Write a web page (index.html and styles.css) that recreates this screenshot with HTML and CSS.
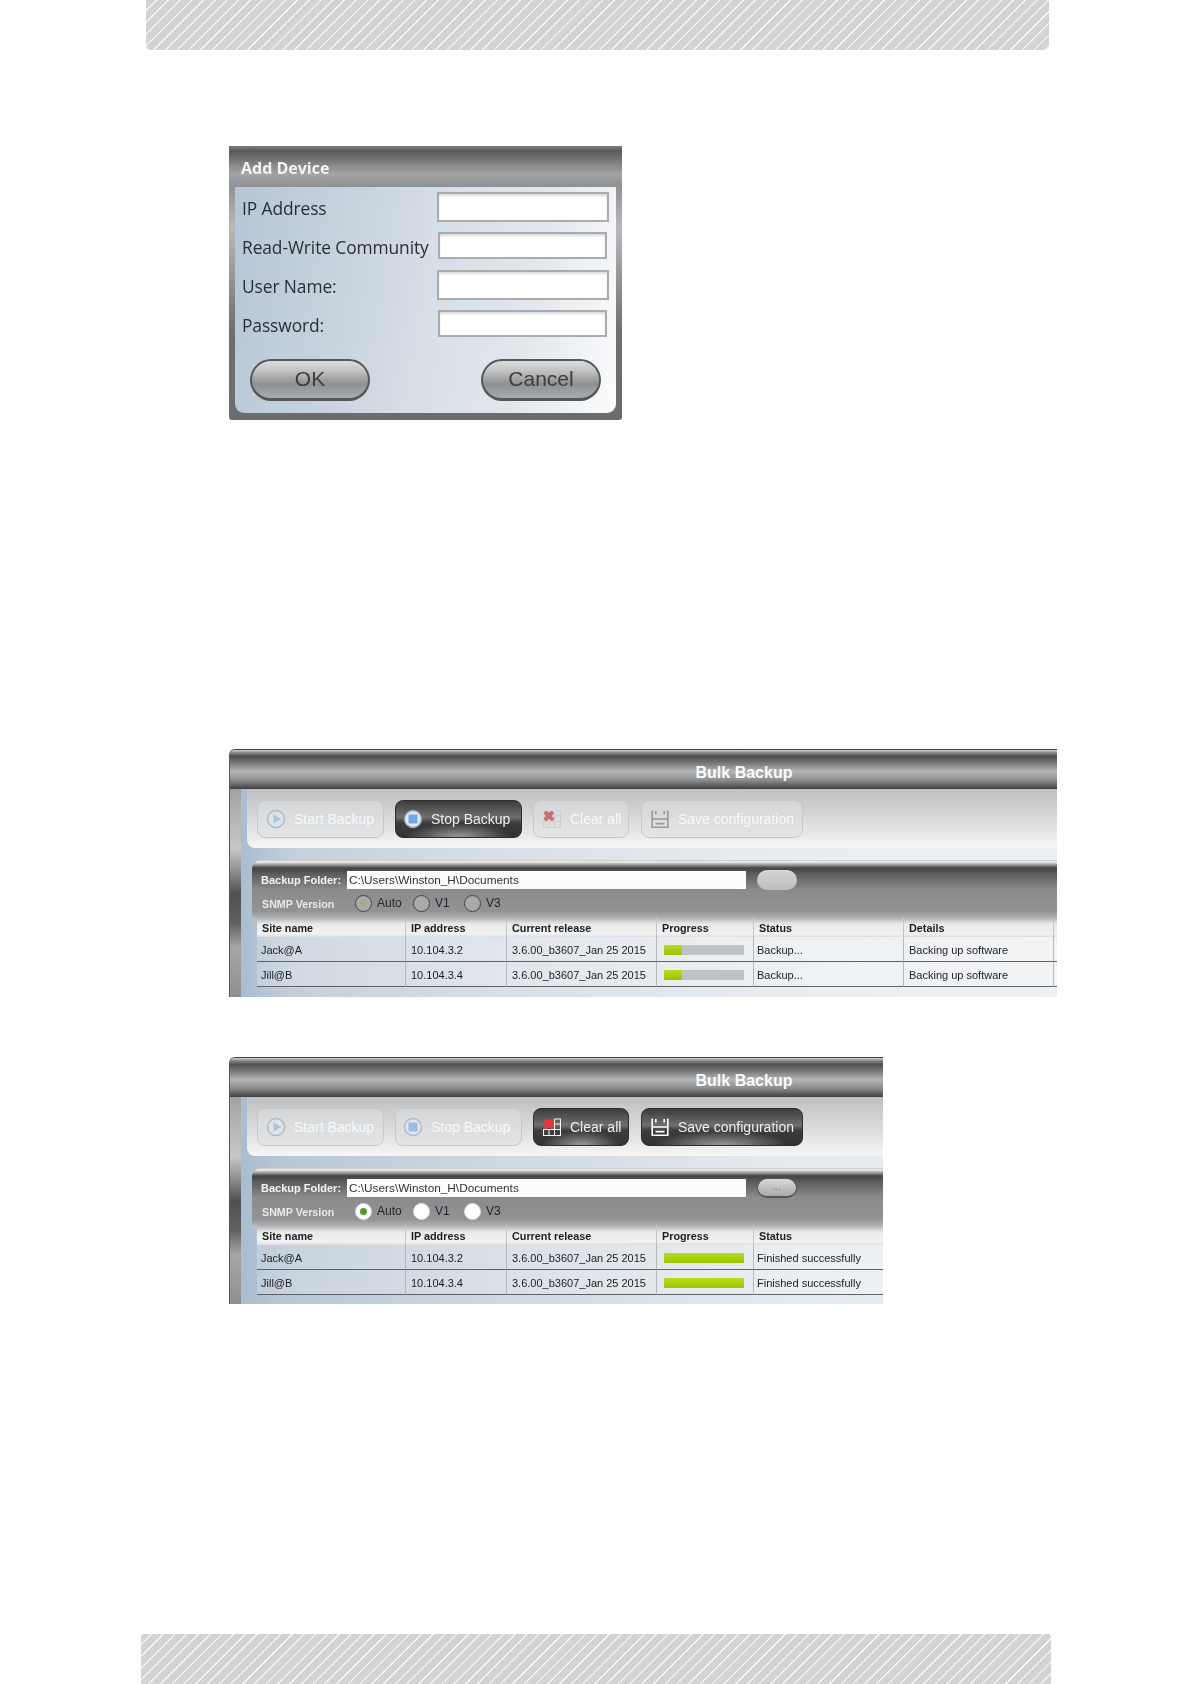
FILE: index.html
```html
<!DOCTYPE html>
<html lang="en">
<head>
<meta charset="utf-8">
<title>Bulk Backup</title>
<link rel="stylesheet" href="styles.css">
</head>
<body>
<svg class="defs" width="0" height="0" aria-hidden="true">
  <defs>
    <symbol id="i-play" viewBox="0 0 20 20">
      <circle cx="10" cy="10" r="8.5" fill="#dfe6ec" stroke="#8fa3b5" stroke-width="1.4"/>
      <path d="M7.5 5.5 15 10l-7.5 4.5z" fill="#8fb0d0"/>
    </symbol>
    <symbol id="i-stop" viewBox="0 0 20 20">
      <circle cx="10" cy="10" r="8.5" fill="#e4eaef" stroke="#8fa3b5" stroke-width="1.4"/>
      <rect x="5.5" y="5.5" width="9" height="9" rx="1" fill="#6aa8e8"/>
    </symbol>
    <symbol id="i-clear" viewBox="0 0 18 18">
      <path d="M11.5 1h6v16.5H.5V11.5h17M11.5 1v16.5M6 11.5v6M11.5 6h6" fill="none" stroke="#f4f4f4" stroke-width="1.1"/>
      <path d="M3 .5 6 2.6 9 .5l2 2.4-2 3 2.4 3-2.4 2.4L6 9 3 11.4.5 9 2.6 6 .5 3z" fill="#e8343c"/>
    </symbol>
    <symbol id="i-save" viewBox="0 0 18 18">
      <path d="M1.2.5V17.2H16.8V.5M1.2 9H16.8M4.5 13.6h9M4.8 1v3.5M13.2 1v3.5" fill="none" stroke="#fff" stroke-width="1.6"/>
    </symbol>
  </defs>
</svg>

<header class="band band-top"></header>

<section class="dialog">
  <h2 class="dialog-title">Add Device</h2>
  <div class="dialog-body">
    <div class="form">
      <label class="form-label">IP Address</label><input class="field field-lg" type="text">
      <label class="form-label">Read-Write Community</label><input class="field field-sm" type="text">
      <label class="form-label">User Name:</label><input class="field field-lg" type="text">
      <label class="form-label">Password:</label><input class="field field-sm" type="text">
    </div>
    <div class="dialog-actions">
      <button class="pill" type="button">OK</button>
      <button class="pill" type="button">Cancel</button>
    </div>
  </div>
</section>

<section class="win win-running">
  <div class="win-inner">
    <h2 class="win-title">Bulk Backup</h2>
    <div class="win-body">
      <div class="toolbar">
        <button class="tool tool-start" type="button"><svg class="ico ico-round"><use href="#i-play"/></svg>Start Backup</button>
        <button class="tool tool-stop tool-on" type="button"><svg class="ico ico-round"><use href="#i-stop"/></svg>Stop Backup</button>
        <button class="tool tool-clear" type="button"><svg class="ico ico-sq"><use href="#i-clear"/></svg>Clear all</button>
        <button class="tool tool-save" type="button"><svg class="ico ico-sq"><use href="#i-save"/></svg>Save configuration</button>
      </div>
      <div class="panel">
        <div class="panel-head">
          <div class="folder-row">
            <span class="folder-label">Backup Folder:</span>
            <span class="folder-input">C:\Users\Winston_H\Documents</span>
            <span class="browse"></span>
          </div>
          <div class="snmp-row">
            <span class="snmp-label">SNMP Version</span>
            <span class="radio radio-on"></span><span class="radio-text radio-text-auto">Auto</span>
            <span class="radio"></span><span class="radio-text radio-text-v1">V1</span>
            <span class="radio"></span><span class="radio-text">V3</span>
          </div>
        </div>
        <table class="grid">
          <thead>
            <tr><th>Site name</th><th>IP address</th><th>Current release</th><th>Progress</th><th>Status</th><th>Details</th><th></th></tr>
          </thead>
          <tbody>
            <tr><td>Jack@A</td><td>10.104.3.2</td><td>3.6.00_b3607_Jan 25 2015</td><td><div class="bar"><div class="bar-fill" style="width:23%"></div></div></td><td>Backup...</td><td>Backing up software</td><td></td></tr>
            <tr><td>Jill@B</td><td>10.104.3.4</td><td>3.6.00_b3607_Jan 25 2015</td><td><div class="bar"><div class="bar-fill" style="width:23%"></div></div></td><td>Backup...</td><td>Backing up software</td><td></td></tr>
          </tbody>
        </table>
      </div>
    </div>
  </div>
</section>

<section class="win win-done">
  <div class="win-inner">
    <h2 class="win-title">Bulk Backup</h2>
    <div class="win-body">
      <div class="toolbar">
        <button class="tool tool-start" type="button"><svg class="ico ico-round"><use href="#i-play"/></svg>Start Backup</button>
        <button class="tool tool-stop" type="button"><svg class="ico ico-round"><use href="#i-stop"/></svg>Stop Backup</button>
        <button class="tool tool-clear tool-on" type="button"><svg class="ico ico-sq"><use href="#i-clear"/></svg>Clear all</button>
        <button class="tool tool-save tool-on" type="button"><svg class="ico ico-sq"><use href="#i-save"/></svg>Save configuration</button>
      </div>
      <div class="panel">
        <div class="panel-head">
          <div class="folder-row">
            <span class="folder-label">Backup Folder:</span>
            <span class="folder-input">C:\Users\Winston_H\Documents</span>
            <span class="browse browse-on">...</span>
          </div>
          <div class="snmp-row">
            <span class="snmp-label">SNMP Version</span>
            <span class="radio radio-live radio-on"></span><span class="radio-text radio-text-auto">Auto</span>
            <span class="radio radio-live"></span><span class="radio-text radio-text-v1">V1</span>
            <span class="radio radio-live"></span><span class="radio-text">V3</span>
          </div>
        </div>
        <table class="grid">
          <thead>
            <tr><th>Site name</th><th>IP address</th><th>Current release</th><th>Progress</th><th>Status</th><th>Details</th><th></th></tr>
          </thead>
          <tbody>
            <tr><td>Jack@A</td><td>10.104.3.2</td><td>3.6.00_b3607_Jan 25 2015</td><td><div class="bar"><div class="bar-fill" style="width:100%"></div></div></td><td>Finished successfully</td><td></td><td></td></tr>
            <tr><td>Jill@B</td><td>10.104.3.4</td><td>3.6.00_b3607_Jan 25 2015</td><td><div class="bar"><div class="bar-fill" style="width:100%"></div></div></td><td>Finished successfully</td><td></td><td></td></tr>
          </tbody>
        </table>
      </div>
    </div>
  </div>
</section>

<footer class="band band-bottom"></footer>
</body>
</html>
```

FILE: styles.css
```css
* { box-sizing: border-box; }
html, body { margin: 0; padding: 0; background: #fff; }
body { width: 1190px; height: 1684px; overflow: hidden; font-family: "Liberation Sans", Arial, sans-serif; }
.defs { position: absolute; }

.band {
  height: 50px;
  background: repeating-linear-gradient(135deg, #d1d3d4 0, #d1d3d4 6.8px, #fbfbfb 7.2px, #fbfbfb 7.9px, #d1d3d4 8.3px);
}
.band-top { margin-left: 146px; width: 903px; border-radius: 0 0 5px 5px; }
.band-bottom { margin-left: 141px; width: 910px; margin-top: 330px; border-radius: 3px 3px 0 0; }

/* Add Device dialog */
.dialog {
  margin: 96px 0 0 229px;
  width: 393px;
  height: 274px;
  padding: 0 6px 7px;
  border-radius: 3px;
  filter: blur(.5px);
  background: linear-gradient(180deg, #58595b 0, #77797b 6%, #909294 15%, #b8b9ba 30%, #6d6e70 68%, #6a6c6e 100%);
  display: flex;
  flex-direction: column;
}
.dialog-title {
  margin: 0 -6px;
  height: 41px;
  padding: 2px 0 0 12px;
  display: flex;
  align-items: center;
  font: bold 16px "Open Sans", sans-serif;
  color: #f2f2f2;
  background: linear-gradient(180deg, #7c7d7e 0, #58595b 12%, #7c7e80 40%, #a3a4a5 68%, #8e8f91 100%);
}
.dialog-body {
  flex: 1;
  border-radius: 0 0 9px 9px;
  background: linear-gradient(100deg, #b6c6d6 0%, #c8d3de 30%, #d6dee6 50%, #e2e7ec 75%, #fbfcfd 100%);
}
.form {
  display: grid;
  grid-template-columns: 202px 172px;
  grid-auto-rows: 39px;
  align-items: center;
  justify-items: center;
}
.form-label {
  justify-self: start;
  padding: 2px 0 0 7px;
  font: 17.4px "Open Sans", sans-serif;
  letter-spacing: -.1px;
  color: #2a2f36;
  white-space: nowrap;
}
.field { display: block; padding: 0; margin: 0; background: #fff; border: 2px solid #a9abac; box-shadow: inset 0 2px 2px #ddd; }
.field-lg { width: 172px; height: 30px; }
.field-sm { width: 169px; height: 27px; justify-self: start; margin-left: 1px; }
.dialog-actions { display: flex; justify-content: space-between; padding: 16px 15px 0; }
.pill {
  width: 120px;
  height: 42px;
  padding: 0 0 2px;
  border: 2px solid #55585a;
  border-bottom-width: 3px;
  border-radius: 21px;
  background: linear-gradient(180deg, #dcdedf 0, #bcbebf 30%, #8e9091 62%, #a9abac 100%);
  font: 21px "Liberation Sans", sans-serif;
  color: #3b3d3f;
}

/* Bulk Backup windows */
.win {
  margin-left: 229px;
  overflow: hidden;
  border-radius: 6px 0 0 0;
  border-top: 1px solid #3f4042;
  border-left: 1px solid #55575a;
  filter: blur(.5px);
}
.win-running { margin-top: 329px; width: 828px; height: 248px; }
.win-done { margin-top: 60px; width: 654px; height: 247px; }
.win-inner {
  width: 1028px;
  height: 100%;
  display: flex;
  flex-direction: column;
  padding-left: 11px;
  background: linear-gradient(180deg, #777 0, #a8aaac 20%, #c6c7c8 40%, #87898b 50%, #4f5052 58%, #606163 70%, #a5a6a8 80%, #8f9092 100%);
}
.win-title {
  margin: 0 0 0 -11px;
  height: 39px;
  padding-top: 7px;
  display: flex;
  align-items: center;
  justify-content: center;
  font-size: 16px;
  font-weight: bold;
  color: #fbfbfb;
  background: linear-gradient(180deg, #d8d8d8 0, #909090 6%, #4f5052 16%, #6e6f71 30%, #b4b5b6 55%, #8a8b8d 78%, #3f4042 100%);
}
.win-body {
  flex: 1;
  background: linear-gradient(90deg, #a9bdcf 0, #b9c8d5 5%, #cfd8e0 25%, #e6ebef 55%, #eef1f4 100%);
}
.win-running .win-body {
  background: linear-gradient(90deg, #a9bdcf 0, #c3cfda 5%, #d8dfe6 25%, #eaeef1 55%, #f0f2f5 100%);
}
.toolbar {
  margin-left: 6px;
  height: 59px;
  display: flex;
  gap: 11px;
  padding: 11px 0 0 10px;
  border-radius: 0 0 0 8px;
  background: linear-gradient(180deg, #bfc0c1 0, #d8d9da 50%, #f6f6f6 100%);
}
.tool {
  height: 38px;
  display: flex;
  align-items: center;
  padding: 0 0 0 8px;
  border: 1px solid #c6c8c9;
  border-radius: 8px;
  background: rgba(222, 224, 225, .55);
  font: 14px "Liberation Sans", sans-serif;
  color: #f8f9f9;
  white-space: nowrap;
}
.tool-start { width: 127px; }
.tool-stop { width: 127px; padding-left: 7px; }
.tool-clear { width: 96px; margin-right: 1px; }
.tool-save { width: 162px; }
.tool-on {
  border: 1px solid #2e2e2e;
  color: #eee;
  background:
    radial-gradient(ellipse 42% 38% at 50% 100%, #9a9a9a, transparent),
    linear-gradient(180deg, #3c3c3c 0, #6f6f6f 45%, #3c3c3c 60%, #333 100%);
}
.ico { flex: none; display: block; }
.ico-round { width: 20px; height: 20px; margin-right: 8px; }
.ico-sq { width: 18px; height: 18px; margin: 0 9.5px 0 .5px; }
.tool:not(.tool-on) .ico { opacity: .6; }
.tool-save:not(.tool-on) .ico { filter: brightness(.5); opacity: .75; }
.tool-clear:not(.tool-on) .ico { filter: brightness(.8); }

.panel { margin: 12px 0 0 11px; }
.panel-head {
  height: 57px;
  padding: 11px 0 0 9px;
  border-radius: 9px 0 0 0;
  background: linear-gradient(180deg, #c2c2c2 0, #f0f0f0 3%, #424344 14%, #5c5d5e 25%, #8a8b8c 52%, #929394 90%, #aeafb0 100%);
}
.folder-row { display: flex; align-items: center; height: 18px; }
.folder-label { width: 86px; font-size: 11px; font-weight: bold; color: #f4f4f4; white-space: nowrap; }
.folder-input {
  width: 399px;
  height: 18px;
  padding-left: 2px;
  line-height: 18px;
  font-size: 11.8px;
  color: #303236;
  background: #fcfcfc;
}
.browse {
  width: 40px;
  height: 20px;
  margin-left: 11px;
  border-radius: 10px;
  background: linear-gradient(180deg, #d4d4d4, #bdbdbd);
}
.browse-on {
  border: 1px solid #555;
  border-bottom-width: 2px;
  text-align: center;
  font-size: 10px;
  line-height: 15px;
  color: #777;
  background: linear-gradient(180deg, #d9d9d9, #a9a9a9);
}
.snmp-row { display: flex; align-items: center; height: 20px; margin-top: 4px; }
.snmp-label { width: 94px; padding: 2px 0 0 1px; font-size: 10.7px; font-weight: bold; color: #e8e8e8; }
.radio {
  flex: none;
  width: 17px;
  height: 17px;
  margin-right: 5px;
  border-radius: 50%;
  border: 1px solid #444;
  background: #a9aaab;
  display: grid;
  place-items: center;
}
.radio-on::after { content: ""; width: 7px; height: 7px; border-radius: 50%; background: #a3ac84; }
.radio-live { border-color: #ddd; background: #fff; }
.radio-live.radio-on::after { background: #4f9a20; }
.radio-text { font-size: 12px; color: #25272a; }
.radio-text-auto { width: 36px; }
.radio-text-v1 { width: 29px; }

.grid { margin-left: 5px; width: 897px; table-layout: fixed; border-collapse: separate; border-spacing: 0; font-size: 11px; color: #1c1d1f; }
.grid th:nth-child(1), .grid td:nth-child(1) { width: 149px; }
.grid th:nth-child(2), .grid td:nth-child(2) { width: 101px; }
.grid th:nth-child(3), .grid td:nth-child(3) { width: 150px; }
.grid th:nth-child(4), .grid td:nth-child(4) { width: 97px; }
.grid th:nth-child(5), .grid td:nth-child(5) { width: 150px; }
.grid th:nth-child(6), .grid td:nth-child(6) { width: 150px; }
.grid th {
  height: 20px;
  padding: 2px 0 0 5px;
  text-align: left;
  font-size: 10.8px;
  font-weight: bold;
  border-right: 1px solid #c4c6c8;
  background: linear-gradient(180deg, #a9a9a9 0, #e9e9e9 35%, #f2f2f2 85%, #dcdcdc 100%);
}
.grid td {
  height: 25px;
  padding: 2px 0 0 5px;
  white-space: nowrap;
  background: rgba(255, 255, 255, .22);
  border-right: 1px solid #b4b8bc;
  border-bottom: 1px solid #5f6367;
}
.grid td:nth-child(1) { padding-left: 4px; }
.grid td:nth-child(5) { padding-left: 3px; }
.bar { width: 80px; height: 10px; margin: 0 0 0 2px; background: #c0c2c3; }
.bar-fill { height: 100%; background: linear-gradient(180deg, #b9dd1a, #97c600); }
```
